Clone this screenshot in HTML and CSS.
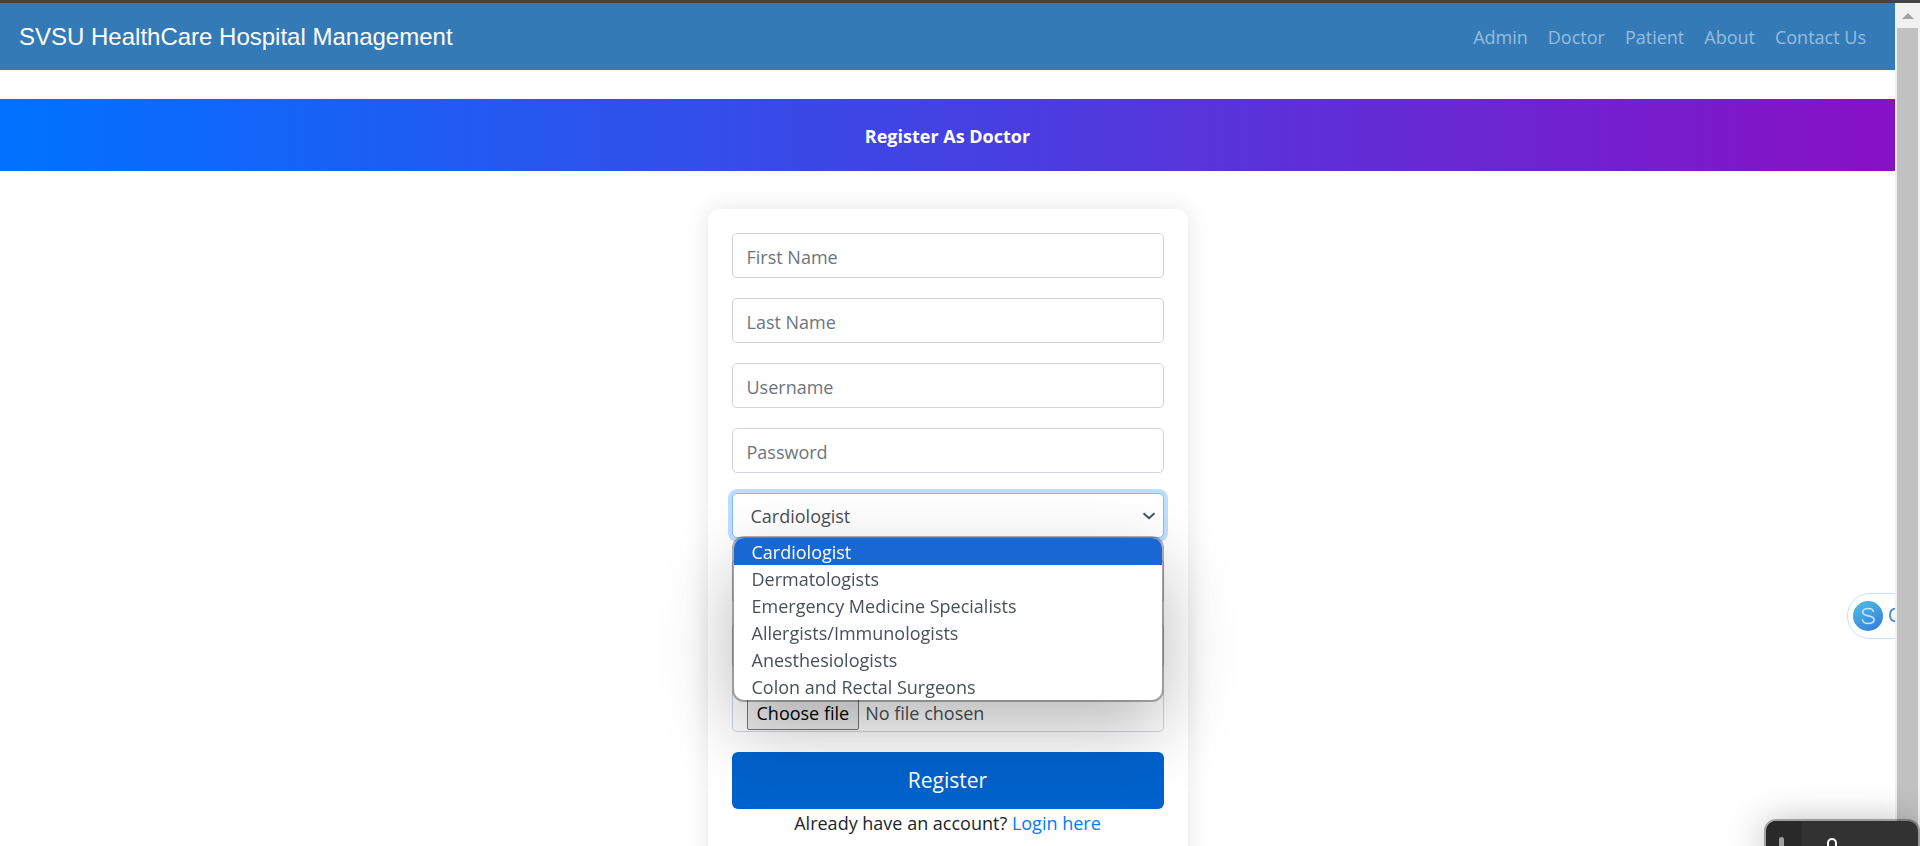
FILE: index.html
```html
<!DOCTYPE html>
<html lang="en">
<head>
<meta charset="utf-8">
<title>SVSU HealthCare Hospital Management</title>
<link rel="stylesheet" href="styles.css">
</head>
<body>
<div class="window">
  <div class="page">
    <nav class="navbar">
      <a class="brand" href="#">SVSU HealthCare Hospital Management</a>
      <div class="nav-links">
        <a href="#">Admin</a>
        <a href="#">Doctor</a>
        <a href="#">Patient</a>
        <a href="#">About</a>
        <a href="#">Contact Us</a>
      </div>
    </nav>
    <header class="banner"><h1>Register As Doctor</h1></header>
    <form class="card">
      <input class="control" type="text" placeholder="First Name" aria-label="First Name">
      <input class="control" type="text" placeholder="Last Name" aria-label="Last Name">
      <input class="control" type="text" placeholder="Username" aria-label="Username">
      <input class="control" type="password" placeholder="Password" aria-label="Password">
      <div class="select-wrap">
        <select class="control select" aria-label="Specialization">
          <option>Cardiologist</option>
          <option>Dermatologists</option>
          <option>Emergency Medicine Specialists</option>
          <option>Allergists/Immunologists</option>
          <option>Anesthesiologists</option>
          <option>Colon and Rectal Surgeons</option>
        </select>
        <svg class="chevron" viewBox="0 0 14 8" aria-hidden="true"><path d="M1.5 1.2 7 6.2l5.500-5"/></svg>
        <ul class="options" role="listbox" aria-label="Specialization">
          <li class="active" role="option" aria-selected="true">Cardiologist</li>
          <li role="option">Dermatologists</li>
          <li role="option">Emergency Medicine Specialists</li>
          <li role="option">Allergists/Immunologists</li>
          <li role="option">Anesthesiologists</li>
          <li role="option">Colon and Rectal Surgeons</li>
        </ul>
      </div>
      <input class="control" type="text" aria-label="Mobile">
      <input class="control" type="text" aria-label="Address">
      <label class="control file">
        <input class="file-input" type="file">
        <span class="file-button">Choose file</span>
        <span>No file chosen</span>
      </label>
      <div class="actions">
        <button class="submit" type="submit">Register</button>
        <p class="login">Already have an account? <a href="#">Login here</a></p>
      </div>
    </form>
    <button class="assistant" type="button"><span class="assistant-logo"><svg viewBox="0 0 30 30" aria-hidden="true"><path d="M20.500 11c-.3-2.500-2.500-3.500-5.400-3.500-3 0-5.300 1.300-5.300 3.700 0 5.300 11.300 2 11.300 7.400 0 2.600-2.600 3.900-5.700 3.900-3.400 0-5.800-1.400-6-4.300"/></svg></span><span>C</span></button>
  </div>
  <div class="scrollbar"><span class="arrow"></span><span class="thumb"></span></div>
</div>
<div class="dock">
  <svg viewBox="0 0 152 25" aria-hidden="true"><path class="dock-side" d="M0 0h36v25H0z"/><path class="dock-bar" d="M13 25v-7q0-2 2.500-2t2.500 2v7z"/><path class="dock-mic" d="M62 27v-5a4 4 0 0 1 8 0v5"/></svg>
</div>
</body>
</html>
```
FILE: styles.css
```css
* { box-sizing: border-box; }

body {
  margin: 0;
  height: 100vh;
  overflow: hidden;
  border-top: 3px solid #444;
  background: #fff;
  color: #212529;
  font: 18px/27px "Segoe UI", "Open Sans", sans-serif;
}

a { text-decoration: none; }

.window {
  display: flex;
  height: 100%;
}

.page {
  position: relative;
  flex: 1;
  overflow: hidden;
}

.navbar {
  display: flex;
  align-items: center;
  justify-content: space-between;
  height: 67px;
  padding: 0 29px 0 19px;
  background: #337ab7;
}

.brand {
  color: #fff;
  font: 24px/36px "Liberation Sans", Arial, sans-serif;
}

.nav-links {
  display: flex;
  gap: 20px;
  padding-top: 2px;
}

.nav-links a { color: rgba(255, 255, 255, .5); }

.banner {
  margin-top: 29px;
  padding: 24px 0 21px;
  background: linear-gradient(90deg, #0072ff, #8811c5);
  color: #fff;
  text-align: center;
}

.banner h1 {
  margin: 0;
  font-size: 18px;
  line-height: 27px;
  font-weight: 700;
}

.card {
  display: flex;
  flex-direction: column;
  gap: 20px;
  width: 480px;
  margin: 38px auto 0;
  padding: 24px 24px 60px;
  border-radius: 12px;
  box-shadow: 0 0 24px rgba(0, 0, 0, .1);
}

.control {
  display: block;
  width: 100%;
  height: 45px;
  padding: 2px 14px 0;
  border: 1px solid #ced4da;
  border-radius: 5px;
  background: #fff;
  color: #495057;
  font: inherit;
}

.control::placeholder {
  color: #6c757d;
  opacity: 1;
}

.select-wrap { position: relative; }

.select {
  padding-left: 18px;
  border-color: #80bdff;
  box-shadow: 0 0 0 4px #bfdeff;
  appearance: none;
}

.chevron {
  position: absolute;
  top: 19px;
  right: 8px;
  width: 14px;
  height: 8px;
  fill: none;
  stroke: #495057;
  stroke-width: 2;
}

.options {
  position: absolute;
  z-index: 2;
  top: 100%;
  left: 2px;
  right: 2px;
  margin: 0;
  padding: 0;
  overflow: hidden;
  border-radius: 10px;
  background: #fff;
  box-shadow: 0 0 0 2px rgba(0, 0, 0, .3), 0 28px 72px rgba(0, 0, 0, .28);
  color: #495057;
  list-style: none;
}

.options li {
  padding: 2px 18px 0;
  line-height: 25px;
}

.options .active {
  background: #1967d2;
  color: #fff;
}

.file {
  position: relative;
  display: flex;
  align-items: flex-end;
  gap: 6px;
  height: 44px;
  padding: 0 14px 1px;
}

.file-input {
  position: absolute;
  inset: 0;
  opacity: 0;
}

.file-button {
  padding: 2px 9px;
  border: 1px solid #767676;
  border-radius: 2px;
  background: #efefef;
  color: #000;
}

.file > span:last-child { padding-bottom: 3px; }

.submit {
  display: block;
  width: 100%;
  height: 57px;
  border: 0;
  border-radius: 6px;
  background: #0062cc;
  color: #fff;
  font: inherit;
  font-size: 21px;
}

.login {
  margin: 1px 0 0;
  text-align: center;
}

.login a { color: #007bff; }

.assistant {
  position: absolute;
  top: 590px;
  right: -42px;
  display: flex;
  align-items: center;
  gap: 5px;
  width: 90px;
  height: 46px;
  padding: 0 5px;
  border: 1px solid #c8dcff;
  border-radius: 23px;
  background: #fff;
  color: #3c7fe0;
  font: 18px/24px Inter, sans-serif;
}

.assistant-logo {
  width: 30px;
  height: 30px;
  border-radius: 50%;
  background: linear-gradient(150deg, #4fc0e6, #3478dc);
}

.assistant-logo svg {
  display: block;
  fill: none;
  stroke: #c4e4f7;
  stroke-width: 1.6;
}

.scrollbar {
  display: flex;
  flex-direction: column;
  width: 25px;
  padding: 10px 2px 0;
  background: #f1f1f1;
}

.arrow {
  align-self: center;
  margin-bottom: 9px;
  border: 6px solid transparent;
  border-top: 0;
  border-bottom-color: #a3a3a3;
}

.thumb {
  flex: 1;
  background: #c1c1c1;
}

.dock {
  position: fixed;
  right: 2px;
  bottom: 0;
  width: 152px;
  height: 25px;
  overflow: hidden;
  border-radius: 10px 10px 0 0;
  background: #323232;
  box-shadow: 0 0 0 2px rgba(0, 0, 0, .3), 0 8px 40px rgba(0, 0, 0, .45);
}

.dock svg { display: block; }
.dock-side { fill: #292929; }
.dock-bar { fill: #a0a0a0; }

.dock-mic {
  fill: none;
  stroke: #fff;
  stroke-width: 2;
}
```
